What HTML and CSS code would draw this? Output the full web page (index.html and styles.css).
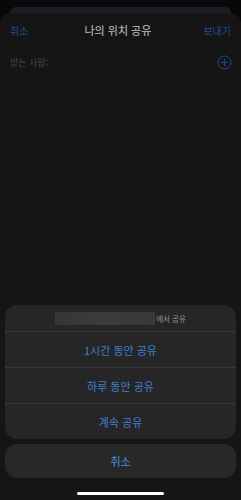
FILE: index.html
```html
<!DOCTYPE html>
<html lang="ko">
<head>
<meta charset="utf-8">
<link rel="stylesheet" href="styles.css">
</head>
<body>
<div class="screen">
  <div class="back-card"></div>
  <div class="sheet">
    <div class="nav">
      <span class="nav-btn">취소</span>
      <span class="nav-title">나의 위치 공유</span>
      <span class="nav-btn">보내기</span>
    </div>
    <div class="recipient">
      <span class="recipient-label">받는 사람:</span>
      <svg class="add-icon" width="15" height="15" viewBox="0 0 15 15">
        <circle cx="7.5" cy="7.5" r="6.5" fill="none" stroke="#1f4a82" stroke-width="1"/>
        <path d="M7.5 4.2V10.8M4.2 7.5H10.8" stroke="#1f4a82" stroke-width="1" stroke-linecap="round"/>
      </svg>
    </div>
    <div class="spacer"></div>
    <div class="action-group">
      <div class="action-header">
        <span class="blurred"></span><span class="header-text">에서 공유</span>
      </div>
      <div class="action">1시간 동안 공유</div>
      <div class="action">하루 동안 공유</div>
      <div class="action">계속 공유</div>
    </div>
    <div class="cancel">취소</div>
    <div class="home-bar"></div>
  </div>
</div>
</body>
</html>
```
FILE: styles.css
```css
* { box-sizing: border-box; }
html, body {
  margin: 0;
  padding: 0;
  width: 241px;
  height: 500px;
  background: #080808;
  font-family: "Noto Sans CJK KR", "Noto Sans", sans-serif;
  overflow: hidden;
}
.screen {
  display: flex;
  flex-direction: column;
  height: 500px;
}
.back-card {
  margin: 7px 10px 0;
  height: 6px;
  background: #1b1e24;
  border-radius: 9px 9px 0 0;
  flex: none;
}
.sheet {
  flex: 1;
  display: flex;
  flex-direction: column;
  background: #151515;
  border-radius: 10px 10px 0 0;
}
.nav {
  height: 34px;
  display: flex;
  align-items: center;
  justify-content: space-between;
  padding: 0 10px;
  flex: none;
}
.nav-btn {
  color: #1f4f8c;
  font-size: 10px;
}
.nav-title {
  color: #a8a8a8;
  font-size: 11px;
  font-weight: 500;
  margin-left: 4px;
}
.recipient {
  margin-top: 5px;
  height: 20px;
  display: flex;
  align-items: center;
  justify-content: space-between;
  padding: 0 10px 0 10px;
  flex: none;
}
.recipient-label {
  color: #474747;
  font-size: 9px;
}
.add-icon { margin-right: -1px; }
.spacer { flex: 1; }
.action-group {
  margin: 0 5px;
  background: #262626;
  border-radius: 12px;
  overflow: hidden;
  flex: none;
}
.action-header {
  height: 26px;
  display: flex;
  align-items: center;
  justify-content: center;
}
.blurred {
  width: 100px;
  height: 13px;
  background: linear-gradient(90deg, #363636, #3c3c3c 50%, #383838);
}
.header-text {
  color: #9a9a9a;
  font-size: 7.5px;
  margin-left: 1px;
}
.action {
  height: 36px;
  border-top: 1px solid #393939;
  display: flex;
  align-items: center;
  justify-content: center;
  color: #4080d2;
  font-size: 11px;
}
.cancel {
  margin: 5px 5px 0;
  height: 34px;
  background: #282828;
  border-radius: 12px;
  display: flex;
  align-items: center;
  justify-content: center;
  color: #4080d2;
  font-size: 11px;
  font-weight: 500;
  flex: none;
}
.home-bar {
  margin: 14px auto 5px;
  width: 87px;
  height: 3px;
  border-radius: 2px;
  background: #ffffff;
  flex: none;
}
```
